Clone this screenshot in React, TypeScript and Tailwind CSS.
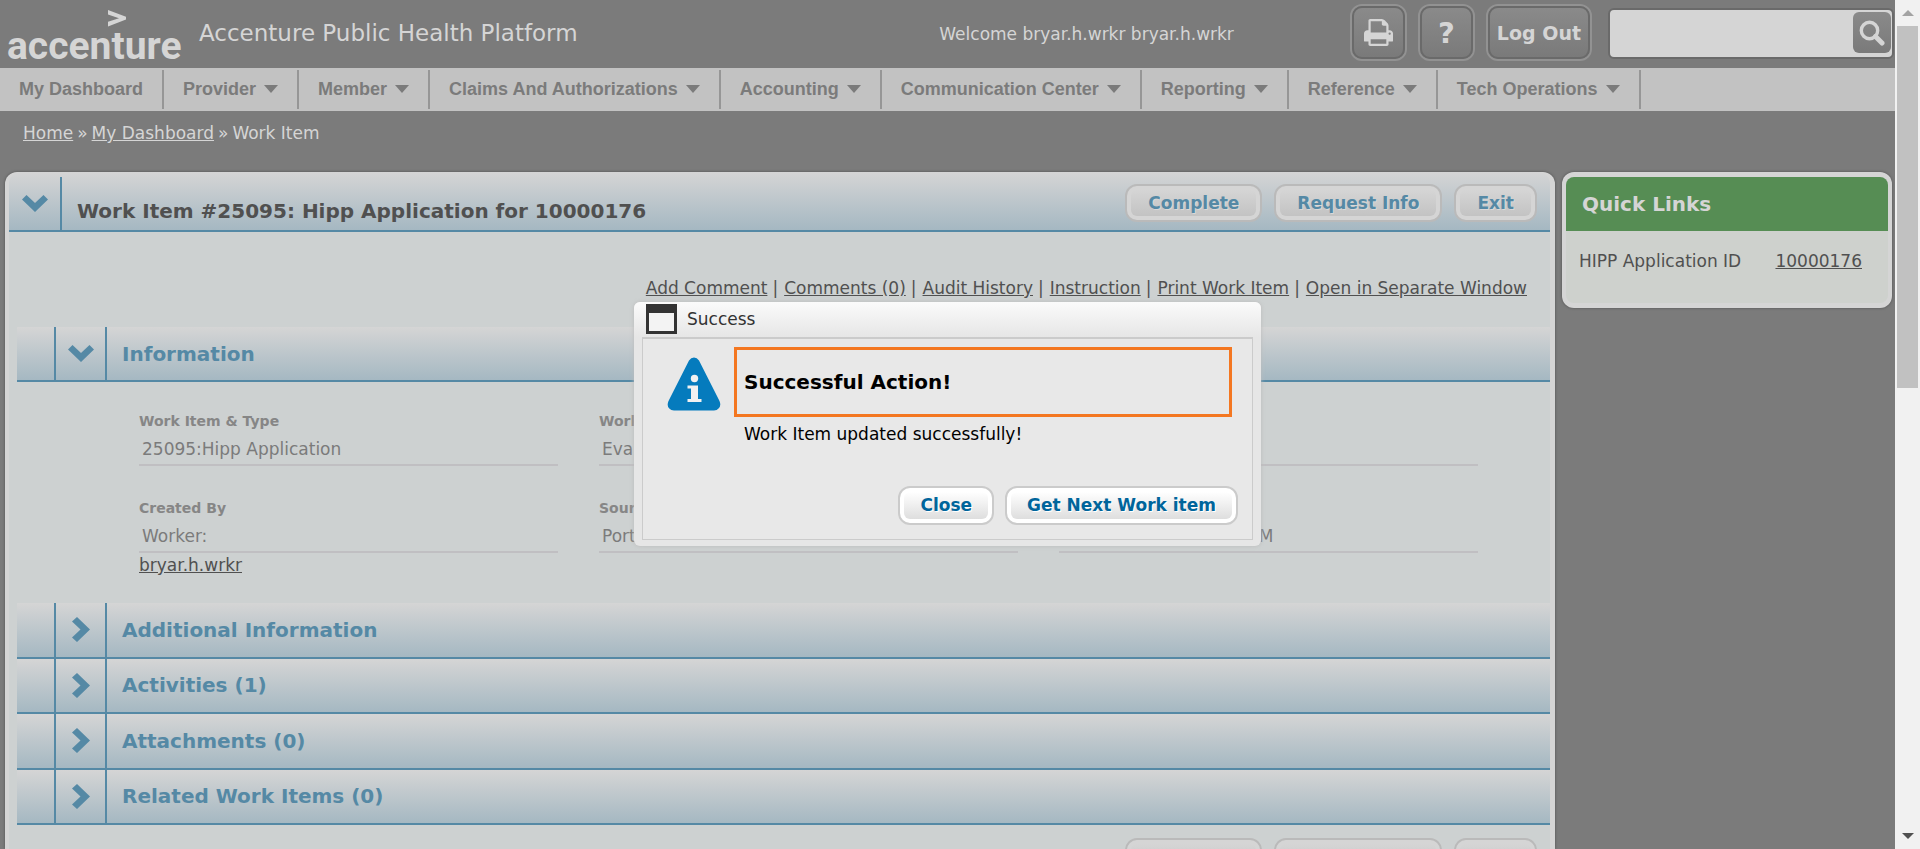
import React from "react";

const NAV = [
  "My Dashboard",
  "Provider",
  "Member",
  "Claims And Authorizations",
  "Accounting",
  "Communication Center",
  "Reporting",
  "Reference",
  "Tech Operations",
];

const LINKS = [
  "Add Comment",
  "Comments (0)",
  "Audit History",
  "Instruction",
  "Print Work Item",
  "Open in Separate Window",
];

const FIELDS: { label: string; value: string; link?: string }[] = [
  { label: "Work Item & Type", value: "25095:Hipp Application" },
  { label: "Work", value: "Evaluate" },
  { label: "Status", value: "Open" },
  { label: "Created By", value: "Worker:", link: "bryar.h.wrkr" },
  { label: "Source", value: "Portal" },
  { label: "Date", value: "01/10/2020 10:15:30 AM" },
];

function Chevron({ down }: { down?: boolean }) {
  return down ? (
    <svg viewBox="0 0 26 17" className="h-[17px] w-[26px] shrink-0" aria-hidden="true">
      <path d="M0 4.5 4.5 0 13 8 21.5 0 26 4.5 13 17Z" fill="#5589a5" />
    </svg>
  ) : (
    <svg viewBox="0 0 18 25" className="h-[25px] w-[18px] shrink-0" aria-hidden="true">
      <path d="M0 4.5 5 0 18 12.5 5 25 0 20.5 8.5 12.5Z" fill="#5589a5" />
    </svg>
  );
}

function PillButton({ children, dim }: { children: React.ReactNode; dim?: boolean }) {
  return (
    <button
      type="button"
      className={
        dim
          ? "h-[38px] rounded-xl border-2 border-[#bababa] bg-[#d5d5d5] p-1 font-bold text-[#5589a5]"
          : "h-[39px] rounded-xl border-2 border-[#cbcbcb] bg-white p-1 font-bold text-[#00659b]"
      }
    >
      <span
        className={
          dim
            ? "flex h-full items-center rounded-md bg-linear-to-b from-[#d5d5d5] to-[#c3c3c3] px-[17px] text-shadow-[1px_1px_0_#d8d8d8]"
            : "flex h-full items-center rounded-md bg-linear-to-b from-white to-[#dedede] px-4 text-shadow-[1px_1px_0_#ffffff]"
        }
      >
        {children}
      </span>
    </button>
  );
}

function Actions() {
  return (
    <div className="flex gap-3">
      <PillButton dim>Complete</PillButton>
      <PillButton dim>Request Info</PillButton>
      <PillButton dim>Exit</PillButton>
    </div>
  );
}

function Section({ title, open }: { title: string; open?: boolean }) {
  return (
    <button
      type="button"
      aria-expanded={!!open}
      className="flex min-h-[55px] w-full items-stretch border-b-2 border-[#5589a5] bg-linear-to-b from-[#d5d5d5] to-[#a5b8c2] text-left"
    >
      <span className="w-[37px]" />
      <span className="flex w-[53px] items-center justify-center border-x-2 border-[#5589a5]">
        <Chevron down={open} />
      </span>
      <span className="self-center pl-[15px] text-xl font-bold text-[#5589a5]">{title}</span>
    </button>
  );
}

function HeaderButton({ children, label }: { children: React.ReactNode; label: string }) {
  return (
    <button type="button" aria-label={label} className="h-[57px] rounded-xl border-2 border-[#929292]">
      <span className="flex h-full min-w-[53px] items-center justify-center rounded-[10px] border-2 border-[#6a6a6a] bg-linear-to-b from-[#8a8a8a] to-[#7a7a7a] px-[7px]">
        {children}
      </span>
    </button>
  );
}

function Logo() {
  return (
    <svg viewBox="0 0 176 60" className="h-[60px] w-[176px]" role="img" aria-label="accenture">
      <path d="M101 2 119 8.8V11.6L101 18.400V13.800L112 10.200 101 6.600Z" fill="#d5d5d5" />
      <text x="0" y="51" fontSize="39" fontWeight="700" fill="#d5d5d5" fontFamily="Roboto, 'Liberation Sans', sans-serif">
        accenture
      </text>
    </svg>
  );
}

function Header() {
  return (
    <header className="flex h-[68px] items-start text-[#d5d5d5]">
      <div className="flex items-start gap-4 pl-[7px]">
        <div className="pt-2">
          <Logo />
        </div>
        <h1 className="pt-[21px] text-[23px] leading-6">Accenture Public Health Platform</h1>
      </div>
      <p className="ml-auto pt-[22px] pr-[116px]">Welcome bryar.h.wrkr bryar.h.wrkr</p>
      <div className="flex gap-[11px] pt-1">
        <HeaderButton label="Print">
          <svg viewBox="0 128 1664 1536" className="h-[27px] w-[29px]" aria-hidden="true">
            <path
              fill="currentColor"
              d="M384 1536h896v-256h-896v256zM384 896h896v-384h-160q-40 0-68-28t-28-68v-160h-640v640zM1536 960q0-26-19-45t-45-19-45 19-19 45 19 45 45 19 45-19 19-45zM1664 960v416q0 13-9.5 22.5t-22.5 9.5h-224v160q0 40-28 68t-68 28h-960q-40 0-68-28t-28-68v-160h-224q-13 0-22.5-9.5t-9.5-22.5v-416q0-79 56.5-135.5t135.5-56.5h64v-544q0-40 28-68t68-28h672q40 0 88 20t76 48l152 152q28 28 48 76t20 88v256h64q79 0 135.5 56.5t56.5 135.5z"
            />
          </svg>
        </HeaderButton>
        <HeaderButton label="Help">
          <span className="text-[29px] font-bold">?</span>
        </HeaderButton>
        <HeaderButton label="Log Out">
          <span className="text-[19px] font-bold">Log Out</span>
        </HeaderButton>
      </div>
      <form className="mt-2 mr-[1px] ml-4 flex h-[51px] w-[286px] rounded-md border-2 border-[#6a6a6a] bg-[#d5d5d5] pt-[2px] pr-[1px]">
        <input type="text" aria-label="Search" className="min-w-0 flex-1 bg-transparent px-2 text-[#505050] outline-none" />
        <button type="button" aria-label="Search" className="flex h-[41px] w-[38px] items-center justify-center rounded-md bg-linear-to-b from-[#8a8a8a] to-[#7a7a7a]">
          <svg viewBox="0 0 26 26" className="h-[26px] w-[26px]" aria-hidden="true">
            <circle cx="10.5" cy="10.5" r="8.2" fill="none" stroke="#d5d5d5" strokeWidth="3.4" />
            <path d="M16.5 16.5 23 23" stroke="#d5d5d5" strokeWidth="5" strokeLinecap="round" />
          </svg>
        </button>
      </form>
    </header>
  );
}

function WorkItem() {
  return (
    <main className="min-w-0 flex-1 rounded-t-xl bg-[#d5d5d5] pr-[5px] pl-1 shadow-[0_0_3px_#505050]">
      <div className="flex h-[60px] rounded-t-xl border-b-2 border-[#5589a5] bg-linear-to-b from-[#d5d5d5] to-[#a5b8c2]">
        <button type="button" aria-label="Collapse work item" className="mt-[5px] flex w-[53px] items-center justify-center border-r-2 border-[#5589a5]">
          <Chevron down />
        </button>
        <h2 className="self-end pb-[5px] pl-[15px] text-xl font-bold text-[#505050]">
          Work Item #25095: Hipp Application for 10000176
        </h2>
        <div className="ml-auto pt-3 pr-[13px]">
          <Actions />
        </div>
      </div>
      <div className="bg-[#cdd1d1] pt-11 pl-2">
        <ul className="flex justify-end gap-[5px] pr-[23px] text-[#505050]">
          {LINKS.map((l, i) => (
            <li key={l} className="flex gap-[6px]">
              {i > 0 && <span>|</span>}
              <a href="#action" className="underline">{l}</a>
            </li>
          ))}
        </ul>
        <div className="mt-[27px]">
          <Section title="Information" open />
        </div>
        <dl className="grid grid-cols-3 gap-x-[41px] pt-[29px] pr-[72px] pb-[18px] pl-[122px]">
          {FIELDS.map((f) => (
            <div key={f.label} className="h-[87px]">
              <dt className="text-sm font-bold text-[#868686]">{f.label}</dt>
              <dd className="mt-[6px]">
                <div className="border-b-2 border-[#c0bfc2] pb-[3px] pl-[3px] text-[#7b7b7b]">{f.value}</div>
                {f.link && <a href="#worker" className="text-[#505050] underline">{f.link}</a>}
              </dd>
            </div>
          ))}
        </dl>
        <div className="grid h-[222px] grid-rows-4">
          <Section title="Additional Information" />
          <Section title="Activities (1)" />
          <Section title="Attachments (0)" />
          <Section title="Related Work Items (0)" />
        </div>
        <div className="flex justify-end py-[13px] pr-[13px]">
          <Actions />
        </div>
      </div>
    </main>
  );
}

function QuickLinks() {
  return (
    <aside className="w-[330px] shrink-0 self-start rounded-xl bg-[#d5d5d5] px-1 py-[5px] shadow-[0_0_3px_#505050]">
      <h2 className="flex h-[54px] items-center rounded-t-lg bg-[#568d54] px-4 text-xl font-bold text-[#d5d5d5]">Quick Links</h2>
      <div className="flex h-[72px] items-start justify-between rounded-b-lg bg-[#ced1cd] pt-[18px] pr-[26px] pl-[13px] text-[#505050]">
        <span>HIPP Application ID</span>
        <a href="#hipp" className="underline">10000176</a>
      </div>
    </aside>
  );
}

function SuccessDialog() {
  return (
    <div role="dialog" aria-labelledby="dialog-title" className="w-[627px] rounded-md bg-[#e6e6e6] pb-[6px] shadow-[0_0_4px_#bcbcbc]">
      <div className="flex h-[35px] items-center gap-[10px] rounded-t-md bg-linear-to-b from-[#fbfbfb] to-[#e6e6e6] pl-3">
        <span className="h-[30px] w-[31px] border-3 border-t-9 border-[#333333] bg-[#f3f3f3]" />
        <span id="dialog-title" className="text-[#333333]">Success</span>
      </div>
      <div className="mx-2 border border-t-2 border-[#cbcbcb] bg-[#e8e8e8] pt-2 pr-[14px] pb-[14px] pl-6">
        <div className="flex items-start gap-[13px] pr-[6px]">
          <svg viewBox="0 0 54 54" className="mt-[10px] h-[54px] w-[54px] shrink-0" aria-hidden="true">
            <path d="M22 3.5Q24 .5 27 .5T32 3.5L52.5 44Q54.5 49 51.5 51.5 50 53.5 47 53.5H7Q4 53.5 2.300 51.5-.5 49 1.500 44Z" fill="#057bbd" />
            <circle cx="27.500" cy="21.500" r="3.700" fill="#f1f1f1" />
            <path d="M20.500 28.500H31V42H34.500V45H20.500V42H24V31.500H20.500Z" fill="#f1f1f1" />
          </svg>
          <div className="flex-1">
            <h3 className="flex h-[70px] items-center border-3 border-[#f47721] pl-[7px] text-xl font-bold text-black">Successful Action!</h3>
            <p className="pt-[5px] pl-[10px] text-black">Work Item updated successfully!</p>
          </div>
        </div>
        <div className="flex justify-end gap-[11px] pt-10">
          <PillButton>Close</PillButton>
          <PillButton>Get Next Work item</PillButton>
        </div>
      </div>
    </div>
  );
}

export default function App() {
  return (
    <div className="flex h-screen overflow-hidden bg-[#7b7b7b] font-['DejaVu_Sans',sans-serif] text-[17px] leading-6">
      <div className="relative flex min-w-0 flex-1 flex-col">
        <Header />
        <nav className="flex h-[43px] items-stretch bg-[#c2c2c2] py-[2px] pr-[1px] font-['Liberation_Sans',sans-serif] text-lg font-bold text-[#7b7b7b]">
          {NAV.map((n, i) => (
            <a key={n} href="#nav" className="flex items-center gap-2 border-r-2 border-[#969696] px-[19px] pb-[2px] whitespace-nowrap">
              {n}
              {i > 0 && (
                <svg viewBox="0 0 14 8" className="h-2 w-[14px]" aria-hidden="true">
                  <path d="M0 0H14L7 8Z" fill="currentColor" />
                </svg>
              )}
            </a>
          ))}
        </nav>
        <div className="flex h-[61px] gap-1 pt-[10px] pl-[23px] text-[#d5d5d5]">
          <a href="#home" className="underline">Home</a>
          <span>»</span>
          <a href="#dashboard" className="underline">My Dashboard</a>
          <span>»</span>
          <span>Work Item</span>
        </div>
        <div className="flex min-h-0 flex-1 gap-[7px] pr-[3px] pl-[5px]">
          <WorkItem />
          <QuickLinks />
        </div>
        <div className="absolute inset-0 flex items-center justify-center pb-[2px]">
          <SuccessDialog />
        </div>
      </div>
      <div className="flex w-[25px] shrink-0 flex-col items-center bg-[#f1f1f1]" aria-hidden="true">
        <svg viewBox="0 0 12 6" className="my-[10px] h-[6px] w-3 shrink-0">
          <path d="M6 0 12 6H0Z" fill="#a3a3a3" />
        </svg>
        <div className="h-[362px] w-[21px] shrink-0 bg-[#c1c1c1]" />
        <svg viewBox="0 0 12 6" className="mt-auto mb-[10px] h-[6px] w-3 shrink-0">
          <path d="M0 0H12L6 6Z" fill="#505050" />
        </svg>
      </div>
    </div>
  );
}
